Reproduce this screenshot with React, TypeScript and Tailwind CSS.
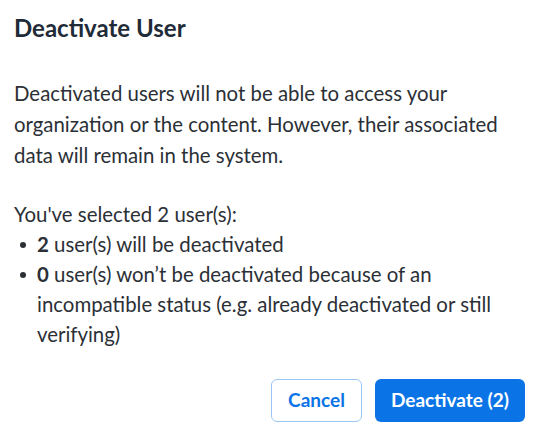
export default function App() {
  return (
    <div className="w-[539px] h-[436px] bg-white px-[14px] pt-[12px] text-[#2b3036]" style={{ fontFamily: 'Lato, "Noto Sans", sans-serif' }}>
      <h1 className="text-[24px] font-bold leading-[32px] text-[#1f2b38]">Deactivate User</h1>

      <p className="mt-[34px] text-[20.4px] leading-[31px]">
        Deactivated users will not be able to access your organization or the content. However, their associated data will remain in the system.
      </p>

      <div className="mt-[28px] text-[20.4px] leading-[30px]">
        <p>You've selected 2 user(s):</p>
        <ul className="pl-[6px]">
          <li className="flex gap-[11px]">
            <span className="mt-[13px] size-[6px] shrink-0 rounded-full bg-[#2b3036]" />
            <span>
              <b className="font-bold">2</b> user(s) will be deactivated
            </span>
          </li>
          <li className="flex gap-[11px]">
            <span className="mt-[13px] size-[6px] shrink-0 rounded-full bg-[#2b3036]" />
            <span>
              <b className="font-bold">0</b> user(s) won’t be deactivated because of an incompatible status (e.g. already deactivated or still verifying)
            </span>
          </li>
        </ul>
      </div>

      <div className="mt-[30px] flex justify-end gap-[13px] pr-[0px]">
        <button className="h-[43px] w-[91px] rounded-[6px] border border-[#9cc7f5] bg-white text-[19px] font-bold text-[#0a74e6]">
          Cancel
        </button>
        <button className="h-[43px] w-[150px] rounded-[6px] bg-[#0a74e6] text-[19px] font-bold text-white">
          Deactivate (2)
        </button>
      </div>
    </div>
  )
}
